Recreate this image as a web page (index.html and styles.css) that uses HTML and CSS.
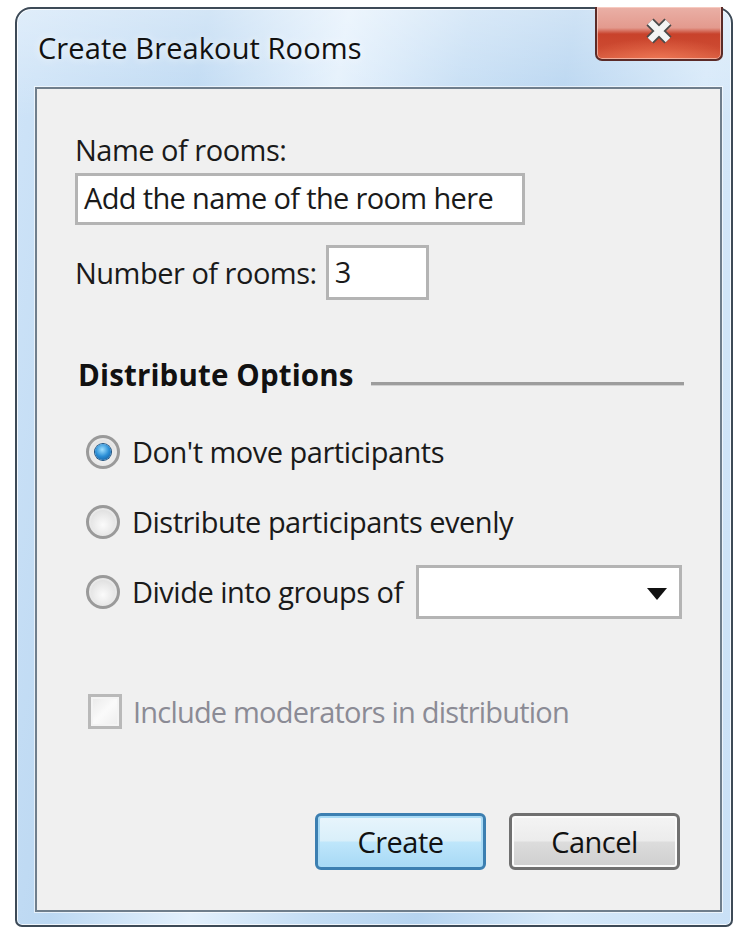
FILE: index.html
```html
<!DOCTYPE html>
<html lang="en">
<head>
<meta charset="utf-8">
<title>Create Breakout Rooms</title>
<link rel="stylesheet" href="styles.css">
</head>
<body>
<div class="window">
  <div class="titlebar">
    <span class="title">Create Breakout Rooms</span>
    <button class="close" aria-label="Close">
      <svg width="28" height="26" viewBox="0 0 28 26">
        <path d="M5 4 L23 22 M23 4 L5 22" stroke="#4a4a4a" stroke-width="10" fill="none"/>
        <path d="M5 4 L23 22 M23 4 L5 22" stroke="#f4f4f4" stroke-width="6.5" fill="none"/>
      </svg>
    </button>
  </div>
  <div class="panel">
    <div class="label">Name of rooms:</div>
    <div class="textbox wide">Add the name of the room here</div>

    <div class="number-row">
      <span class="label">Number of rooms:</span>
      <div class="textbox small">3</div>
    </div>

    <div class="section-head">
      <span class="section-title">Distribute Options</span>
      <span class="rule"></span>
    </div>

    <div class="options">
      <div class="option">
        <span class="radio checked"><span class="dot"></span></span>
        <span class="option-text">Don't move participants</span>
      </div>
      <div class="option">
        <span class="radio"></span>
        <span class="option-text">Distribute participants evenly</span>
      </div>
      <div class="option">
        <span class="radio"></span>
        <span class="option-text">Divide into groups of</span>
        <div class="dropdown">
          <svg class="arrow" width="20" height="12" viewBox="0 0 20 12"><path d="M0 0 H20 L10 12 Z" fill="#111"/></svg>
        </div>
      </div>
    </div>

    <div class="check disabled">
      <span class="checkbox"></span>
      <span class="option-text">Include moderators in distribution</span>
    </div>

    <div class="buttons">
      <button class="btn default">Create</button>
      <button class="btn">Cancel</button>
    </div>
  </div>
</div>
</body>
</html>
```

FILE: styles.css
```css
html, body {
  margin: 0;
  padding: 0;
  background: #ffffff;
}

body {
  width: 737px;
  height: 929px;
  overflow: hidden;
  font-family: "Open Sans", "Noto Sans", sans-serif;
  color: #1a1a1a;
}

/* Aero window frame */
.window {
  margin: 7px 0 0 15px;
  width: 718px;
  height: 920px;
  box-sizing: border-box;
  border: 2px solid #3d4a57;
  border-radius: 16px 16px 7px 7px;
  background:
    linear-gradient(180deg, rgba(255,255,255,0.35) 0%, rgba(255,255,255,0) 12%),
    linear-gradient(100deg, #cfe4f8 0%, #bcd8f2 22%, #e3f0fc 38%, #c4ddf4 52%, #b6d4f0 64%, #d5e8f9 80%, #c9e0f6 100%);
  box-shadow: inset 0 0 0 1px rgba(255,255,255,0.75);
  display: flex;
  flex-direction: column;
  padding: 0 9px 13px 18px;
}

.titlebar {
  height: 78px;
  display: flex;
  justify-content: space-between;
  align-items: flex-start;
}

.title {
  margin: 21px 0 0 3px;
  font-size: 29px;
  line-height: 36px;
  letter-spacing: 0.1px;
  color: #111;
  text-shadow: 0 0 8px rgba(255,255,255,0.9);
}

.close {
  margin: -2px -1px 0 0;
  width: 128px;
  height: 54px;
  border: 2px solid #5b2b28;
  border-top: 0;
  border-radius: 0 0 7px 7px;
  background:
    radial-gradient(ellipse 60% 40% at 50% 100%, rgba(255,140,100,0.55), rgba(255,140,100,0) 100%),
    linear-gradient(180deg, #eab0a6 0%, #e39a8e 40%, #c8422b 52%, #cd4a31 80%, #d65a3f 100%);
  box-shadow: inset 0 0 0 1px rgba(255,220,210,0.6);
  padding: 0;
  display: flex;
  align-items: center;
  justify-content: center;
}

.close svg {
  margin-top: -4px;
}

/* client area */
.panel {
  flex: 1;
  background: #f0f0f0;
  border: 2px solid #6f7e8c;
  box-shadow: 0 0 0 1px rgba(255,255,255,0.6);
  padding: 44px 0 0 38px;
  display: flex;
  flex-direction: column;
}

.label, .option-text, .textbox {
  font-size: 29px;
  letter-spacing: -0.5px;
}

.label {
  line-height: 34px;
}

.textbox {
  box-sizing: border-box;
  background: #fff;
  border: 3px solid #b4b4b4;
  line-height: 44px;
  padding-left: 6px;
}

.textbox.wide {
  margin-top: 6px;
  width: 450px;
  height: 52px;
  letter-spacing: -0.65px;
}

.number-row {
  margin-top: 20px;
  display: flex;
  align-items: center;
  gap: 9px;
}

.textbox.small {
  width: 103px;
  height: 55px;
  line-height: 48px;
}

.section-head {
  margin-top: 58px;
  display: flex;
  align-items: center;
  padding-left: 3px;
}

.section-title {
  font-size: 29.5px;
  font-weight: 700;
  line-height: 34px;
  letter-spacing: 0.15px;
  color: #111;
}

.rule {
  margin: 17px 0 0 17px;
  width: 313px;
  height: 3px;
  background: #9d9d9d;
  box-shadow: 0 1px 0 #d0d0d0;
}

.options {
  margin-top: 42px;
  display: flex;
  flex-direction: column;
  gap: 35px;
  padding-left: 11px;
}

.option, .check {
  display: flex;
  align-items: center;
  height: 35px;
}

.option-text {
  line-height: 34px;
  margin-left: 12px;
}

.radio {
  width: 34px;
  height: 34px;
  flex: none;
  box-sizing: border-box;
  border-radius: 50%;
  border: 3px solid #9a9a9a;
  background: radial-gradient(circle at 50% 60%, #fbfbfb 0%, #e4e4e4 60%, #cfcfcf 100%);
  box-shadow: inset 0 0 0 2px #e9e9e9;
  display: flex;
  align-items: center;
  justify-content: center;
}

.radio .dot {
  width: 16px;
  height: 16px;
  border-radius: 50%;
  background: radial-gradient(circle at 45% 35%, #9fe0ff 0%, #2a8ed6 50%, #0f4f8f 100%);
  box-shadow: 0 0 0 1px #1a4f7e;
}

.dropdown {
  margin-left: 13px;
  width: 266px;
  height: 54px;
  flex: none;
  box-sizing: border-box;
  background: #fff;
  border: 3px solid #b4b4b4;
  display: flex;
  align-items: center;
  justify-content: flex-end;
  padding-right: 12px;
}

.arrow {
  margin-top: 4px;
}

.check {
  margin-top: 85px;
  padding-left: 13px;
}

.checkbox {
  width: 34px;
  height: 35px;
  flex: none;
  box-sizing: border-box;
  border: 3px solid #b9b9b9;
  background: linear-gradient(135deg, #e9e9e9 0%, #fafafa 50%, #ededed 100%);
  box-shadow: inset 0 0 0 2px #f4f4f4;
}

.check.disabled .option-text {
  color: #8b8b95;
  margin-left: 11px;
  letter-spacing: -0.8px;
}

.buttons {
  margin-top: 84px;
  display: flex;
  gap: 23px;
  padding-left: 240px;
}

.btn {
  width: 171px;
  height: 57px;
  box-sizing: border-box;
  border: 3px solid #707070;
  border-radius: 6px;
  background: linear-gradient(180deg, #f4f4f4 0%, #ececec 48%, #dcdcdc 52%, #cfcfcf 100%);
  box-shadow: inset 0 0 0 2px #fbfbfb;
  font-family: "Open Sans", "Noto Sans", sans-serif;
  font-size: 29px;
  letter-spacing: -0.5px;
  color: #111;
  padding: 0;
}

.btn.default {
  border-color: #3c7fb1;
  background: linear-gradient(180deg, #e8f5fc 0%, #d9effa 48%, #bee6fb 52%, #a7d9f5 100%);
  box-shadow: inset 0 0 0 2px #a9dbf6;
}
```
